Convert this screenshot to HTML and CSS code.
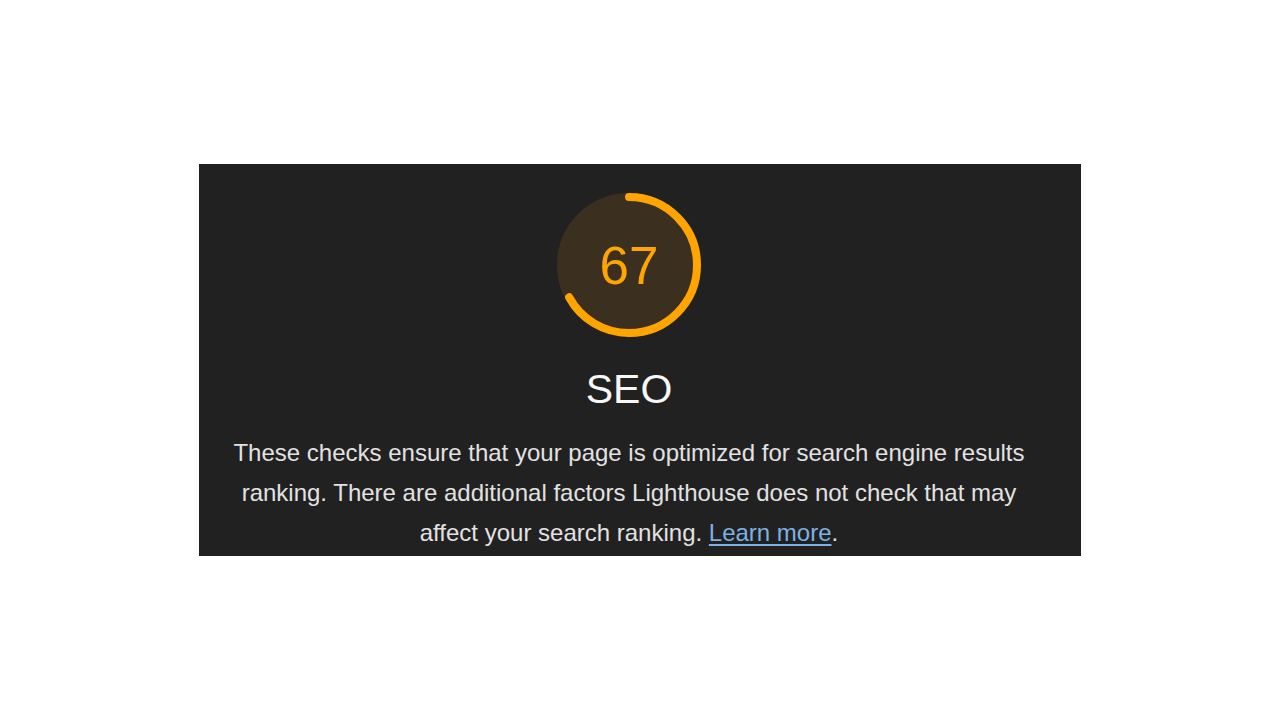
FILE: index.html
```html
<!DOCTYPE html>
<html lang="en">
<head>
<meta charset="utf-8">
<title>SEO</title>
<link rel="stylesheet" href="styles.css">
</head>
<body>
<main class="stage">
  <section class="panel">
    <div class="gauge">
      <svg class="gauge-svg" viewBox="0 0 144 144" width="144" height="144" aria-hidden="true">
        <circle class="gauge-base" cx="72" cy="72" r="68"></circle>
        <circle class="gauge-arc" cx="72" cy="72" r="68" style="stroke-dasharray: 286.3 427.3"></circle>
      </svg>
      <span class="gauge-value">67</span>
    </div>
    <h2 class="title">SEO</h2>
    <p class="desc">These checks ensure that your page is optimized for search engine results ranking. There are additional factors Lighthouse does not check that may affect your search ranking. <a class="link" href="#">Learn more</a>.</p>
  </section>
</main>
</body>
</html>
```
FILE: styles.css
```css
html, body {
  margin: 0;
  padding: 0;
  background: #ffffff;
}

.stage {
  width: 1280px;
  height: 720px;
  display: flex;
  align-items: center;
  justify-content: center;
}

.panel {
  box-sizing: border-box;
  width: 882px;
  height: 392px;
  overflow: hidden;
  background: #212121;
  padding: 29px 52px 0 30px;
  display: flex;
  flex-direction: column;
  align-items: center;
  font-family: "Liberation Sans", Arial, Helvetica, sans-serif;
}

.gauge {
  position: relative;
  width: 144px;
  height: 144px;
  flex: none;
}

.gauge-svg {
  display: block;
}

.gauge-base {
  fill: #3b301f;
  stroke: #3b301f;
  stroke-width: 8;
}

.gauge-arc {
  fill: none;
  stroke: #ffa400;
  stroke-width: 8;
  stroke-linecap: round;
  transform: rotate(-90deg);
  transform-origin: 72px 72px;
}

.gauge-value {
  position: absolute;
  inset: 0;
  display: flex;
  align-items: center;
  justify-content: center;
  color: #ffa400;
  font-size: 53px;
  line-height: 1;
  padding-top: 1px;
}

.title {
  margin: 28px 0 0;
  font-size: 41px;
  line-height: 48px;
  font-weight: 400;
  color: #f7f7f7;
}

.desc {
  margin: 20px 0 0;
  font-size: 24px;
  line-height: 40px;
  color: #e2e2e2;
  text-align: center;
}

.link {
  color: #7db1e2;
  text-decoration: underline;
  text-underline-offset: 3px;
}
```
